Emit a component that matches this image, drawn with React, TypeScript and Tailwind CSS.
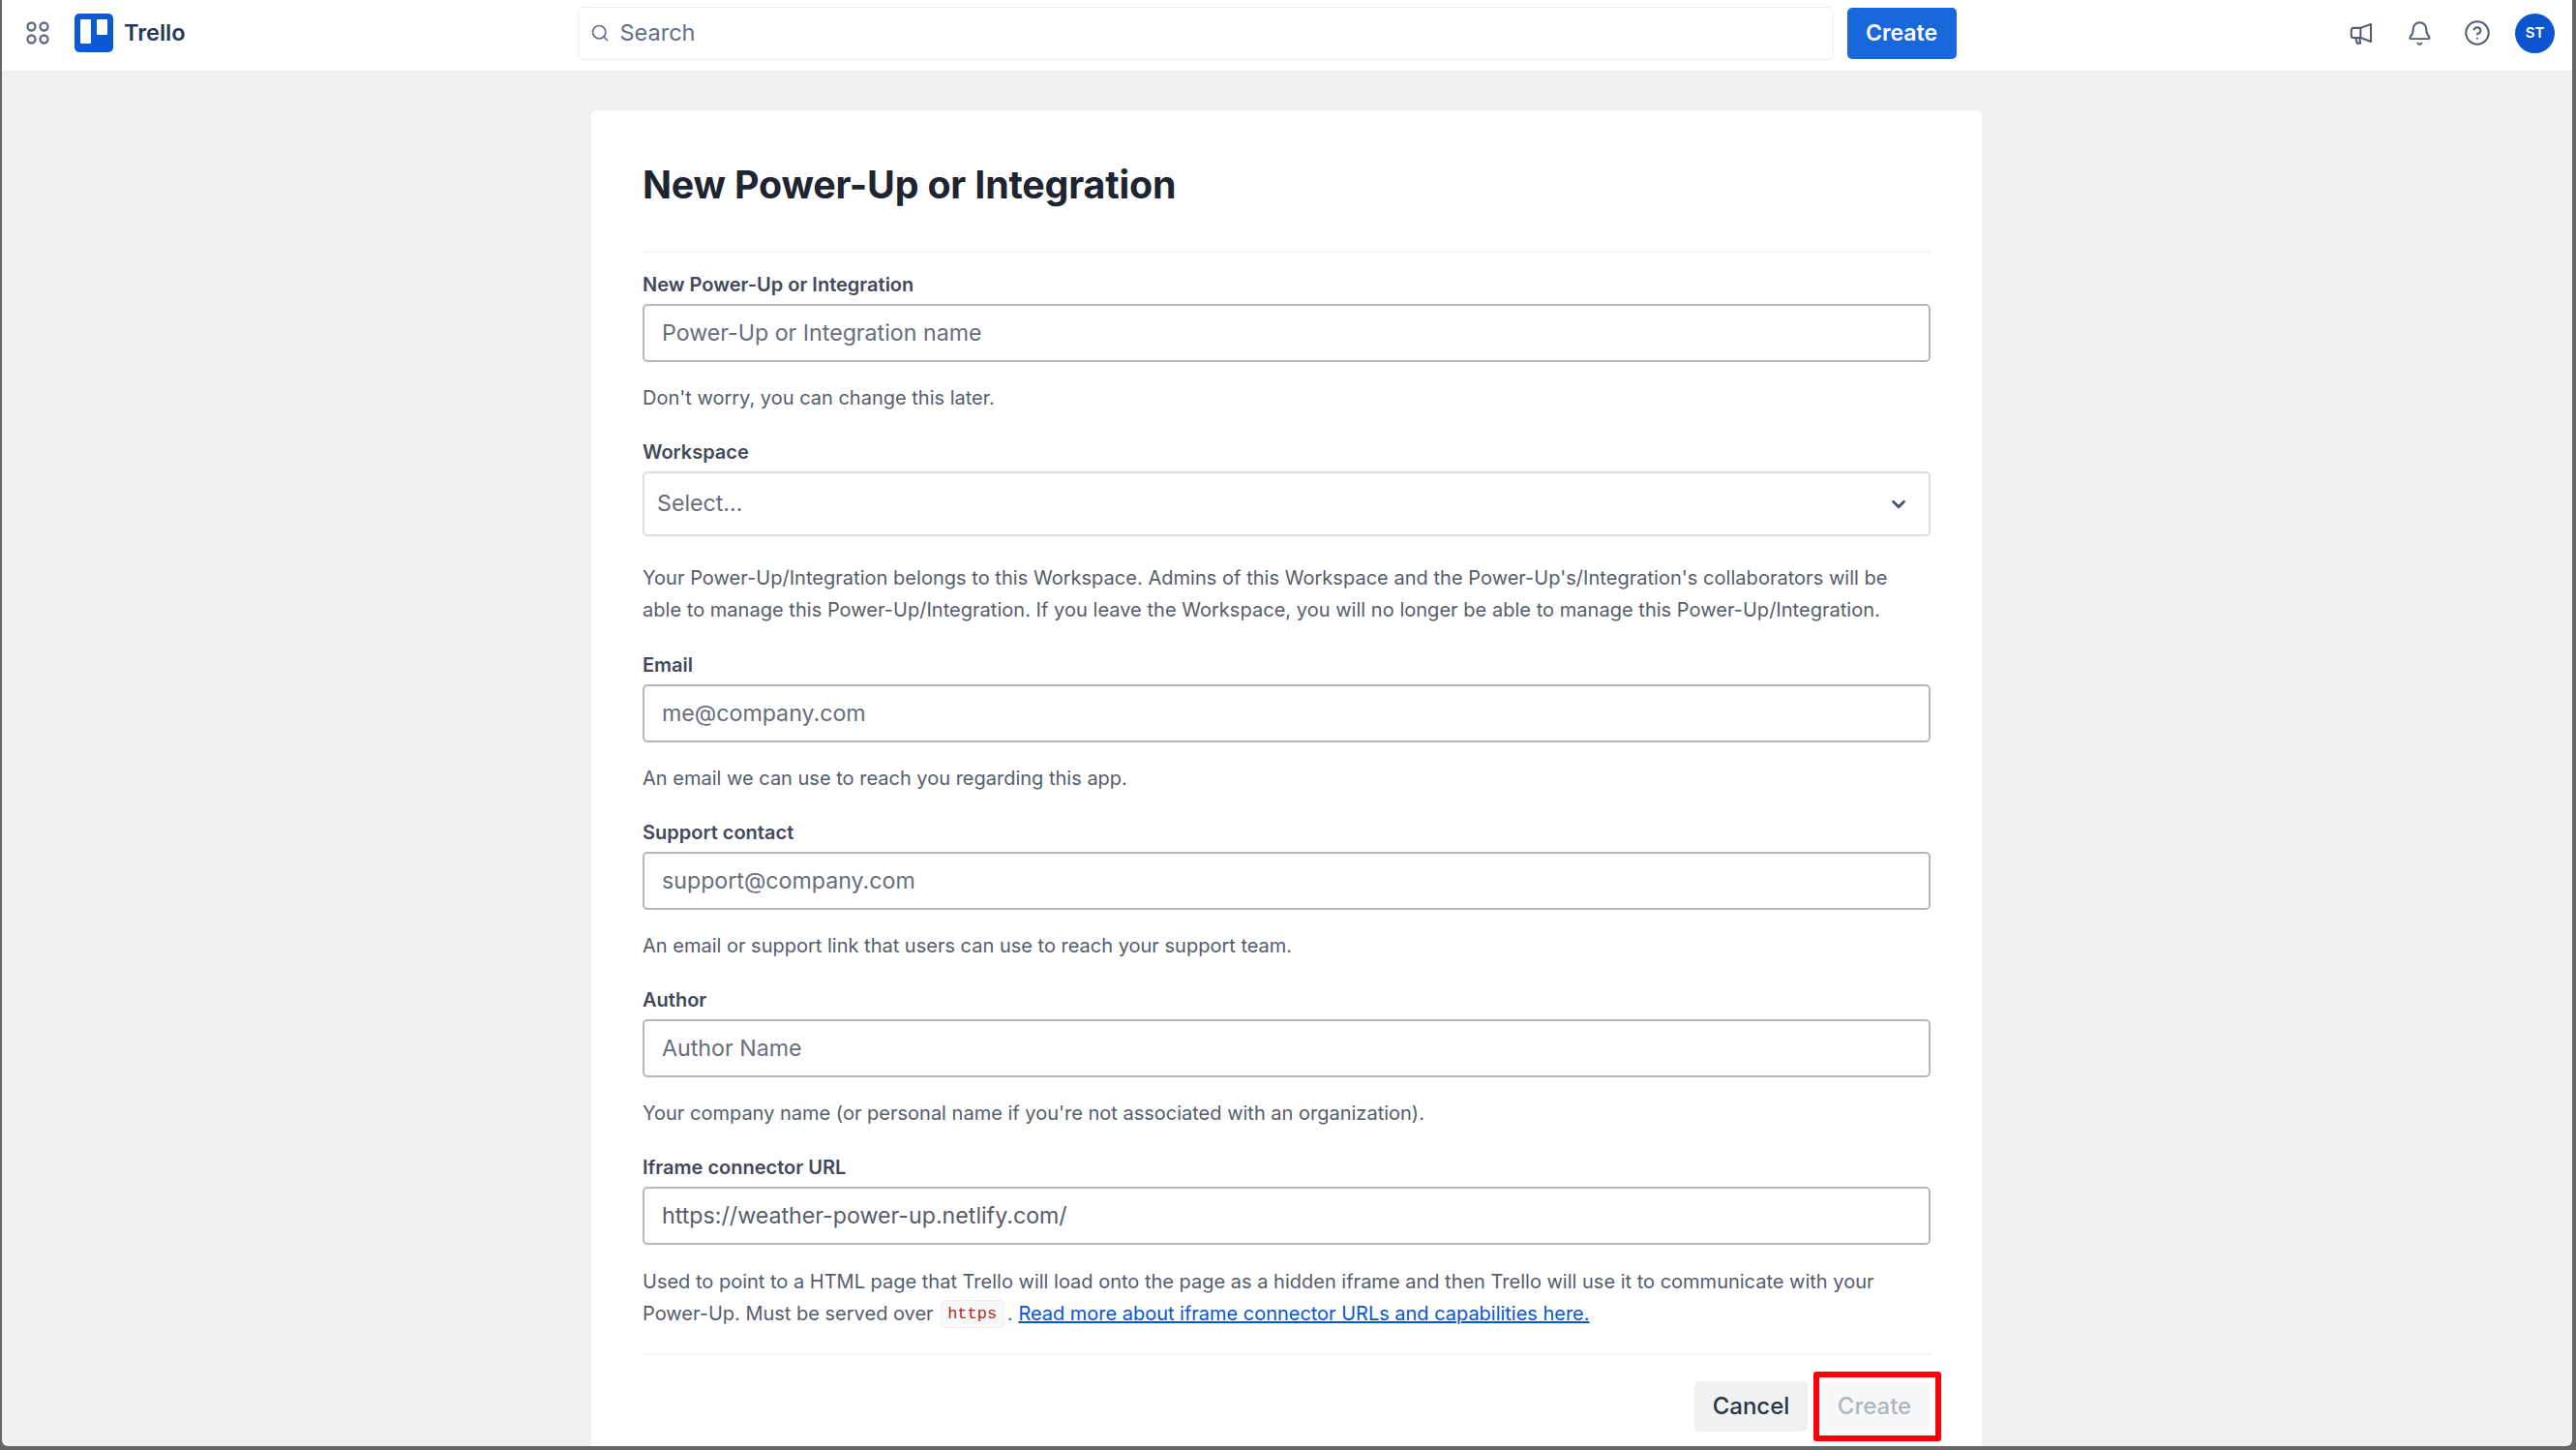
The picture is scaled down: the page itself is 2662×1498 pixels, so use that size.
import { Search, Bell, CircleHelp, ChevronDown } from 'lucide-react';

const labelClass = 'block text-[20px] leading-[28px] font-semibold text-[#42495a]';
const helpClass = 'text-[20px] leading-[33px] text-[#555d6b]';
const inputClass =
  'mt-[6px] w-full h-[60px] rounded-[5px] border-2 border-[#b4b7bc] bg-white pl-[18px] pr-[18px] pb-[1px] text-[23.2px] text-[#555d6b] placeholder:text-[#666e7c] outline-none';

function Field({ label, placeholder, help }: { label: string; placeholder: string; help: string }) {
  return (
    <div>
      <label className={labelClass}>{label}</label>
      <input className={inputClass} placeholder={placeholder} />
      <p className={`${helpClass} mt-[21px] mb-[25px]`}>{help}</p>
    </div>
  );
}

export default function App() {
  return (
    <div className="w-[2662px] h-[1498px] overflow-hidden bg-[#666666] pl-[2px] pr-[4px] pb-[4px] font-['Inter',sans-serif]">
      <div className="h-full rounded-b-[6px] overflow-hidden bg-[#eff1f3] flex flex-col">
        {/* Header */}
        <header className="h-[73px] shrink-0 bg-white flex items-center pl-[24px] pr-[18px] pb-[5px]">
          <svg width="26" height="26" viewBox="0 0 26 26" fill="none" stroke="#626f86" strokeWidth="2.4">
            <circle cx="6.5" cy="6.5" r="4" />
            <circle cx="19.5" cy="6.5" r="4" />
            <circle cx="6.5" cy="19.5" r="4" />
            <circle cx="19.5" cy="19.5" r="4" />
          </svg>
          <svg className="ml-[25px]" width="40" height="40" viewBox="0 0 40 40">
            <rect width="40" height="40" rx="5" fill="#0c5ad1" />
            <rect x="6" y="6" width="11" height="25" rx="1" fill="white" />
            <rect x="23" y="6" width="11" height="16" rx="1" fill="white" />
          </svg>
          <span className="ml-[11px] text-[23.5px] font-semibold text-[#253858]">Trello</span>

          <div className="ml-[405px] w-[1298px] h-[55px] rounded-[6px] border border-[#eceef0] bg-white flex items-center pl-[12px]">
            <Search size={20} className="text-[#626f86]" />
            <span className="ml-[11px] text-[23.5px] text-[#626f86]">Search</span>
          </div>
          <button className="ml-[14px] w-[113px] h-[53px] rounded-[5px] bg-[#1868db] text-white text-[23px] font-semibold">
            Create
          </button>

          <div className="ml-auto flex items-center">
            <svg width="27" height="27" viewBox="0 0 24 24" fill="none" stroke="#505b6e" strokeWidth="1.8" strokeLinejoin="round" strokeLinecap="round">
              <path d="M2.5 9c0-1.2.8-2 2-2H11l9.5-3.5v16L11 16H4.500c-1.200 0-2-.8-2-2z" />
              <path d="M11 7v9" />
              <path d="M6.500 16l1.300 5h3l-.8-5" />
            </svg>
            <Bell size={27} strokeWidth={1.7} className="ml-[33px] text-[#505b6e]" />
            <CircleHelp size={28} strokeWidth={1.7} className="ml-[32px] text-[#505b6e]" />
            <div className="ml-[25px] w-[41px] h-[41px] rounded-full bg-[#0c55cf] text-white text-[15px] font-semibold flex items-center justify-center">
              ST
            </div>
          </div>
        </header>

        {/* Form card */}
        <main className="flex-1 pt-[41px] pl-[609px]">
          <div className="w-[1437px] h-[1400px] rounded-t-[6px] bg-white px-[53px]">
            <h1 className="pt-[52px] pb-[43px] text-[39.4px] leading-[50px] font-bold tracking-[-0.2px] text-[#1f2530] border-b-2 border-[#f5f6f7]">
              New Power-Up or Integration
            </h1>

            <div className="mt-[19px]">
              <Field label="New Power-Up or Integration" placeholder="Power-Up or Integration name" help="Don't worry, you can change this later." />

              <label className={labelClass}>Workspace</label>
              <div className="mt-[6px] h-[67px] rounded-[5px] border-2 border-[#dcdee1] flex items-center justify-between pl-[13px] pr-[20px]">
                <span className="text-[23.2px] text-[#666e7c]">Select...</span>
                <ChevronDown size={22} strokeWidth={3} className="text-[#44546f]" />
              </div>
              <p className={`${helpClass} mt-[27px] mb-[26px] tracking-[0.03px]`}>
                Your Power-Up/Integration belongs to this Workspace. Admins of this Workspace and the Power-Up's/Integration's collaborators will be
                <br />
                able to manage this Power-Up/Integration. If you leave the Workspace, you will no longer be able to manage this Power-Up/Integration.
              </p>

              <Field label="Email" placeholder="me@company.com" help="An email we can use to reach you regarding this app." />
              <Field label="Support contact" placeholder="support@company.com" help="An email or support link that users can use to reach your support team." />
              <Field label="Author" placeholder="Author Name" help="Your company name (or personal name if you're not associated with an organization)." />

              <label className={labelClass}>Iframe connector URL</label>
              <input className={inputClass} defaultValue="https://weather-power-up.netlify.com/" />
              <p className={`${helpClass} mt-[22px]`}>
                Used to point to a HTML page that Trello will load onto the page as a hidden iframe and then Trello will use it to communicate with your
              </p>
              <div className={`${helpClass} flex items-center`}>
                <span>Power-Up. Must be served over</span>
                <code className="ml-[7px] h-[29px] w-[66px] rounded-[5px] border border-[#eceef0] bg-[#f7f8f9] flex items-center justify-center font-['Liberation_Mono',monospace] text-[17px] text-[#ae2e24]">
                  https
                </code>
                <span className="ml-[3px]">.</span>
                <a href="#" className="ml-[6px] text-[#0c55cf] underline tracking-[-0.02px]">Read more about iframe connector URLs and capabilities here.</a>
              </div>

              <div className="mt-[24px] border-t-2 border-[#f5f6f7] flex justify-end items-center gap-[11px] pt-[27px]">
                <button className="w-[117px] h-[52px] rounded-[5px] bg-[#f0f1f3] text-[24px] font-medium text-[#2c3542]">Cancel</button>
                <div className="relative w-[116px] h-[52px] rounded-[5px] bg-[#f7f8f9] flex items-center justify-center text-[24px] font-medium text-[#b3b7bd]">
                  Create
                  <span className="absolute -left-[5px] -right-[11px] -top-[10px] -bottom-[10px] rounded-[3px] border-[6px] border-[#fb0007]" />
                </div>
              </div>
            </div>
          </div>
        </main>
      </div>
    </div>
  );
}
